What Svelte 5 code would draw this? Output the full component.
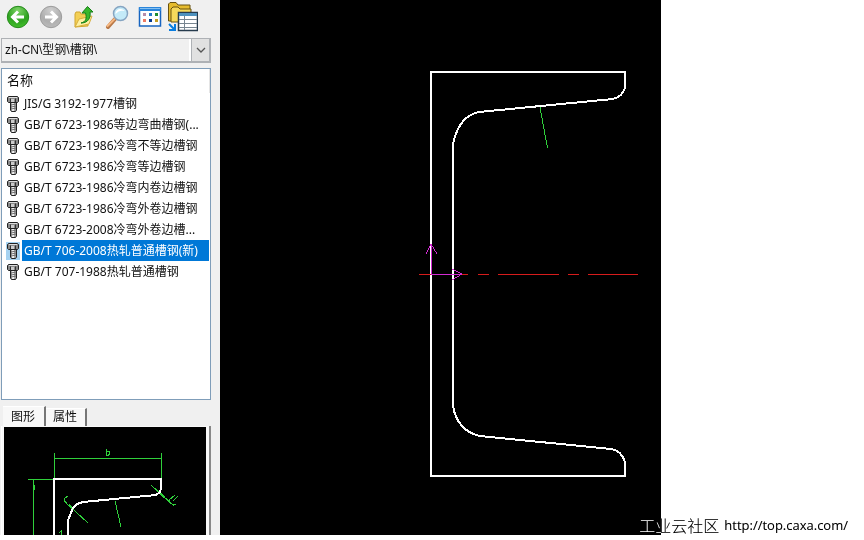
<script lang="ts">
  interface Tool {
    id: string;
    label: string;
  }

  const tools: Tool[] = [
    { id: 'back', label: '后退' },
    { id: 'forward', label: '前进' },
    { id: 'up', label: '向上' },
    { id: 'search', label: '搜索' },
    { id: 'view', label: '查看' },
    { id: 'library', label: '图库' }
  ];

  const profiles: string[] = [
    'JIS/G 3192-1977槽钢',
    'GB/T 6723-1986等边弯曲槽钢(...',
    'GB/T 6723-1986冷弯不等边槽钢',
    'GB/T 6723-1986冷弯等边槽钢',
    'GB/T 6723-1986冷弯内卷边槽钢',
    'GB/T 6723-1986冷弯外卷边槽钢',
    'GB/T 6723-2008冷弯外卷边槽...',
    'GB/T 706-2008热轧普通槽钢(新)',
    'GB/T 707-1988热轧普通槽钢'
  ];

  const tabs: string[] = ['图形', '属性'];

  let selected = $state(7);
  let activeTab = $state(0);
</script>

<main class="workspace">
  <aside class="sidebar">
    <div class="toolbar">
      {#each tools as tool (tool.id)}
        <button class="tool" aria-label={tool.label} title={tool.label}>
          {#if tool.id === 'back' || tool.id === 'forward'}
            <svg width="24" height="24" viewBox="0 0 24 24">
              <defs>
                <radialGradient id="ball-{tool.id}" cx="0.5" cy="0.2" r="0.85">
                  <stop offset="0" stop-color={tool.id === 'back' ? '#7fd468' : '#cfcfcf'} />
                  <stop offset="0.6" stop-color={tool.id === 'back' ? '#2fa320' : '#aeaeae'} />
                  <stop offset="1" stop-color={tool.id === 'back' ? '#45c52d' : '#bdbdbd'} />
                </radialGradient>
              </defs>
              <circle cx="12" cy="12" r="10.7" fill="url(#ball-{tool.id})" stroke={tool.id === 'back' ? '#258a1b' : '#9c9c9c'} />
              {#if tool.id === 'back'}
                <path d="M18 12H7M12 6.5L6.5 12l5.5 5.5" fill="none" stroke="#fff" stroke-width="3" />
              {:else}
                <path d="M6 12h11M12 6.5l5.5 5.5-5.5 5.5" fill="none" stroke="#fff" stroke-width="3" />
              {/if}
            </svg>
          {:else if tool.id === 'up'}
            <svg width="24" height="24" viewBox="0 0 24 24">
              <path d="M3 22V9l1-2h4l1 2h7v12z" fill="#f3cf55" stroke="#d0a52f" />
              <path d="M3 22l4-8 13-3-3 8z" fill="#fff0a2" stroke="#d6ae3c" />
              <path d="M9 18c5-1 6-5 4.500-10H10l5.500-6.500L21 7h-3c1 6-2 11-9 11z" fill="#38b72c" stroke="#177f18" />
            </svg>
          {:else if tool.id === 'search'}
            <svg width="24" height="24" viewBox="0 0 24 24">
              <path d="M3 22l7-8" stroke="#b87848" stroke-width="4" stroke-linecap="round" />
              <path d="M2.500 21l7-7" stroke="#f6b780" stroke-width="2" stroke-linecap="round" />
              <circle cx="15.5" cy="8.5" r="7" fill="#c4eaf8" stroke="#86a5c2" stroke-width="1.5" />
              <path d="M10.500 9c0-3 2-5 5-5 2 0 4 1 4 2-4-1-6 0-9 3z" fill="#fff" />
            </svg>
          {:else if tool.id === 'view'}
            <svg width="24" height="24" viewBox="0 0 24 24">
              <rect x="1.5" y="3" width="21" height="18" fill="#fff" stroke="#1764c0" stroke-width="1.5" />
              <path d="M1 2h22v4H1z" fill="#2a85da" />
              <path d="M2 3h20v1H2z" fill="#85c0f1" />
              <path d="M5 8h3v3H5z" fill="#b58cac" />
              <path d="M11 8h3v3h-3z" fill="#2479c9" />
              <path d="M17 8h3v3h-3z" fill="#218d31" />
              <path d="M5 14h3v3H5z" fill="#ee7a62" />
              <path d="M11 14h3v3h-3z" fill="#073b90" />
              <path d="M17 14h3v3h-3z" fill="#c39c20" />
            </svg>
          {:else}
            <svg width="30" height="30" viewBox="0 0 30 30">
              <path d="M.5 19V2L2 .5h6L10 3h12v16z" fill="#e5bb2e" stroke="#685211" />
              <path d="M3 20V7l2-2h5l2 2h11v13z" fill="#f6d95b" stroke="#685211" />
              <path d="M10.5 10.5h19v18h-19z" fill="#fff" stroke="#263b4d" stroke-width="1.5" />
              <path d="M11 11h18v3H11z" fill="#4d91be" />
              <path d="M11 17.5h18M11 21.5h18M11 25.5h18M16.500 14v14" stroke="#778590" />
              <path d="M1 22l5 5M7 22v6H1" fill="none" stroke="#087de0" stroke-width="2" />
            </svg>
          {/if}
        </button>
      {/each}
    </div>

    <div class="path">
      <select aria-label="路径">
        <option>zh-CN\型钢\槽钢\</option>
      </select>
      <span class="path-arrow">
        <svg width="10" height="6" viewBox="0 0 10 6"><path d="M1 1l4 4 4-4" fill="none" stroke="#555" stroke-width="1.3" /></svg>
      </span>
    </div>

    <div class="list">
      <table>
        <thead>
          <tr><th>名称</th></tr>
        </thead>
        <tbody>
          {#each profiles as profile, i (profile)}
            <tr>
              <td>
                <button class="row" class:selected={selected === i} onclick={() => (selected = i)}>
                  <svg class="bolt" width="14" height="18" viewBox="0 0 14 18">
                    <path d="M4.5 7h6v8l-1 1.5h-4l-1-1.500z" fill="#aaa" stroke="#222" />
                    <path d="M6 7h2v9H6z" fill="#eee" />
                    <path d="M5 10l5-1M5 12l5-1M5 14l5-1" stroke="#555" stroke-width=".8" />
                    <path d="M1.5 2.500l1-1h9l1 1v4l-1 1h-9l-1-1z" fill="#8a8a8a" stroke="#222" />
                    <path d="M3 2h8v1H3z" fill="#ddd" />
                    <path d="M5 4h3v3H5z" fill="#ccc" />
                    <path d="M4.500 3.500v4M9.500 3.500v4" stroke="#333" />
                  </svg>
                  <span class="row-name">{profile}</span>
                </button>
              </td>
            </tr>
          {/each}
        </tbody>
      </table>
    </div>

    <div class="tabs" role="tablist">
      {#each tabs as tab, i (tab)}
        <button class="tab" class:active={activeTab === i} role="tab" aria-selected={activeTab === i} onclick={() => (activeTab = i)}>{tab}</button>
      {/each}
    </div>

    <div class="preview">
      <svg viewBox="0 0 202 108" preserveAspectRatio="xMinYMin slice" shape-rendering="crispEdges">
        <g fill="none" stroke="#2fd03b">
          <path d="M50.5 26v26M157.5 26v26M50 31.5h107M24 52.5h26M29.5 52v56" />
          <path d="M102.5 22v6h2l1-1v-2l-1-1h-2M30.5 58v5" />
          <path d="M111 74l6 26M61 75l23 21M147 58l23 21" />
          <path d="M65 78l4 4M156 66l5 5" stroke-width="2" />
          <path d="M64 69l-4 3v2l3 2M165 73l6-5M165 73l2 4M169 74l5-5M168 77l4 1M57 108v-4l-2 2" />
        </g>
        <path d="M50 108V52h107v9l-1 4-4 3-73 7-6 2-4 4-5 12v15" fill="none" stroke="#fff" stroke-width="2" />
      </svg>
    </div>
  </aside>

  <section class="canvas" aria-label="图形">
    <svg viewBox="0 0 441 535" preserveAspectRatio="xMinYMin meet" shape-rendering="crispEdges">
      <path
        d="M211 72H405V88Q402 97 393 99L259 112Q239 116 233 144V406Q237 430 259 436L391 449Q402 451 405 462V476H211Z"
        fill="none"
        stroke="#fff"
        stroke-width="2"
      />
      <path d="M320 107l7.5 41" stroke="#2fd03b" />
      <path d="M199 274.5h49M258 274.5h11M278 274.5h61M348 274.5h11M368 274.5h50" stroke="#d61c1c" />
      <path d="M211.5 274V244M206 254l5-10 6 10M211 274.5h31M232 269l10 5-10 6" fill="none" stroke="#d32bd3" />
    </svg>
  </section>
</main>

<footer class="watermark">
  <span class="site">工业云社区</span>
  <span>http://top.caxa.com/</span>
</footer>

<style>
  :global(body) {
    margin: 0;
    background: #fff;
  }

  .workspace {
    display: flex;
    width: 76.5vw;
    height: calc(100vh - 5px);
    overflow: hidden;
    background: #000;
    font-family: "Noto Sans", "Noto Sans CJK SC", sans-serif;
    font-size: 12px;
    color: #111;
  }

  button,
  select {
    font: inherit;
    color: inherit;
  }

  .sidebar {
    display: flex;
    flex-direction: column;
    flex: 0 0 220px;
    box-sizing: border-box;
    padding: 0 9px 0 1px;
    background: #f0f0f0;
  }

  .toolbar {
    display: flex;
    align-items: center;
    gap: 9px;
    height: 38px;
    padding: 0 5px 4px;
    box-sizing: border-box;
  }

  .tool {
    padding: 0;
    border: 0;
    background: none;
    line-height: 0;
  }

  .tool:last-child {
    margin-left: -3px;
  }

  .path {
    display: flex;
    height: 25px;
    box-sizing: border-box;
    border: 2px solid #aeb1b5;
    border-width: 1px 2px 2px 1px;
    background: #f0f0f0;
  }

  .path select {
    flex: 1;
    min-width: 0;
    padding: 0 3px;
    border: 0;
    border-right: 2px solid #fff;
    border-radius: 0;
    appearance: none;
    background: none;
    font-family: "Liberation Sans", "Noto Sans CJK SC", sans-serif;
  }

  .path-arrow {
    display: flex;
    align-items: center;
    justify-content: center;
    width: 17px;
    border-left: 1px solid #aeb1b5;
    background: #e1e1e1;
    pointer-events: none;
  }

  .list {
    flex: 1;
    min-height: 0;
    margin-top: 5px;
    border: 1px solid #7f9db9;
    background: #fff;
    overflow: hidden;
  }

  table {
    width: 100%;
    border-collapse: collapse;
    table-layout: fixed;
  }

  th {
    height: 24px;
    padding: 0 5px;
    border-right: 1px solid #e5e5e5;
    font-size: 13px;
    font-weight: normal;
    line-height: 22px;
    text-align: left;
    vertical-align: top;
  }

  td {
    padding: 0;
  }

  .row {
    display: flex;
    align-items: center;
    width: 100%;
    height: 21px;
    padding: 0 1px 0 4px;
    border: 0;
    background: none;
    text-align: left;
  }

  .bolt {
    flex: none;
  }

  .row-name {
    flex: 1;
    margin-left: 2px;
    padding-left: 2px;
    line-height: 21px;
    white-space: nowrap;
    overflow: hidden;
  }

  .selected .row-name {
    background: #0078d7;
    color: #fff;
  }

  .selected .bolt {
    background: #a5d2f1;
  }

  .tabs {
    display: flex;
    align-items: flex-end;
    height: 20px;
    margin: 6px 0 0 2px;
  }

  .tab {
    height: 18px;
    padding: 0 8px 2px 7px;
    border: 0;
    border-right: 2px solid #777;
    border-top: 1px solid #fff;
    background: #f8f8f8;
    line-height: 14px;
  }

  .tab.active {
    height: 20px;
    padding: 0 9px 0 8px;
    line-height: 18px;
  }

  .preview {
    flex: 0 0 108px;
    padding: 1px 3px 0 2px;
    border-left: 1px solid #fff;
    border-right: 2px solid #888;
    background: #f8f8f8;
    overflow: hidden;
  }

  .preview svg {
    display: block;
    width: 100%;
    height: 100%;
    background: #000;
  }

  .canvas {
    flex: 1;
    min-width: 0;
  }

  .canvas svg {
    display: block;
    width: 100%;
    height: 100%;
  }

  /* White text in difference mode stays readable over both backgrounds */
  .watermark {
    position: absolute;
    right: 16px;
    bottom: 5px;
    display: flex;
    align-items: center;
    gap: 5px;
    color: #fff;
    font-family: "Open Sans", "Noto Sans CJK SC", sans-serif;
    font-size: 13px;
    line-height: 20px;
    mix-blend-mode: difference;
  }

  .site {
    font-family: "Noto Sans CJK SC", sans-serif;
    font-size: 16px;
    font-weight: 300;
  }
</style>
